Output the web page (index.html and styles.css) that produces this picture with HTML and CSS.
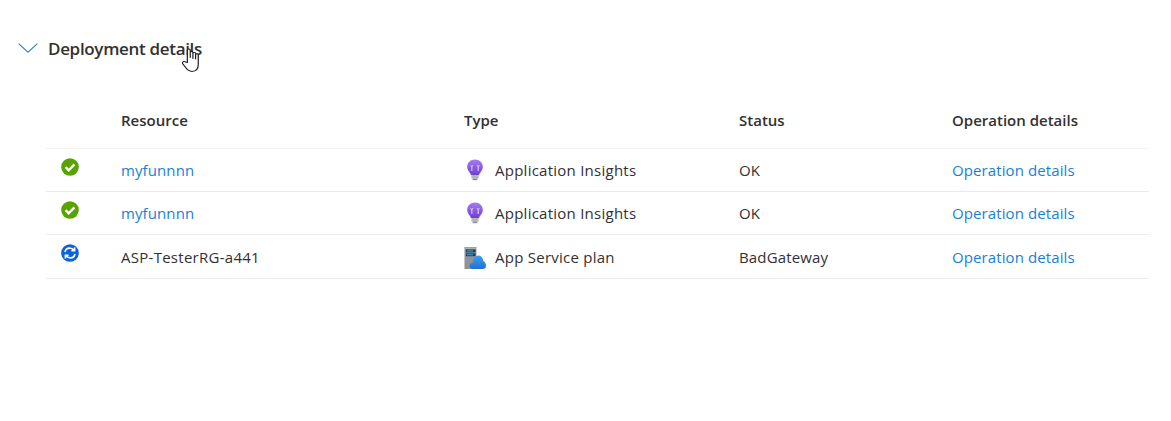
FILE: index.html
```html
<!DOCTYPE html>
<html lang="en">
<head>
<meta charset="utf-8">
<title>Deployment details</title>
<link rel="stylesheet" href="styles.css">
</head>
<body>
<main class="page">
  <header class="section-head">
    <svg class="chevron" width="20" height="10" viewBox="0 0 20 10"><path d="M0.6 0.6 L10 9.2 L19.4 0.6" fill="none" stroke="#2f86d8" stroke-width="1.2"/></svg>
    <h2 class="section-title">Deployment details</h2>
    <svg class="cursor" width="17" height="24" viewBox="0.2 0 14 25" preserveAspectRatio="none"><path d="M4.6 15.2 V2.4 C4.6 0.6 7 0.6 7 2.4 V10 V4.6 C7 3.2 9.2 3.2 9.2 4.6 V11 V5.6 C9.2 4.2 11.4 4.2 11.4 5.6 V11.4 V7 C11.4 5.8 13.6 5.8 13.6 7 V17 C13.6 21 12 24.4 8.4 24.4 C5.6 24.4 4.4 22.6 3.2 20.4 L0.8 16.4 C0 14.8 1.8 13.4 3 14.6 Z" fill="#fff" stroke="#1b1f24" stroke-width="1" stroke-linejoin="round"/></svg>
  </header>
  <section class="table">
    <div class="row head">
      <span></span><span>Resource</span><span>Type</span><span>Status</span><span>Operation details</span>
    </div>
    <div class="row">
      <span class="status-cell"><svg class="status" width="18" height="18" viewBox="0 0 18 18"><circle cx="9" cy="9" r="8.8" fill="#57a300"/><path d="M4.6 9.2 L7.7 12.3 L13.4 6.3" fill="none" stroke="#fff" stroke-width="2.4"/></svg></span>
      <a class="link">myfunnnn</a>
      <span class="type"><svg class="bulb" width="18" height="22" viewBox="0 0 18 22"><defs><linearGradient id="b1" x1="0" y1="0" x2="0" y2="1"><stop offset="0" stop-color="#a67af4"/><stop offset="1" stop-color="#6f3fd0"/></linearGradient></defs><path d="M9 0.6 C4.3 0.6 1.2 4 1.2 8 C1.2 11.6 4 13.2 5 16 H13 C14 13.2 16.8 11.6 16.8 8 C16.8 4 13.7 0.6 9 0.6Z" fill="url(#b1)"/><path d="M4.8 6.2 C4.8 8 6.8 8 6.8 6.2 M5.8 7.6 V12 M11.2 6.2 C11.2 8 13.2 8 13.2 6.2 M12.2 7.6 V12" fill="none" stroke="#e6d8fb" stroke-width="1"/><rect x="5.4" y="16" width="7.2" height="3.4" fill="#b5b5b5"/><rect x="6.6" y="19.4" width="4.8" height="1.8" fill="#8f8f8f"/></svg>Application Insights</span>
      <span>OK</span>
      <a class="link">Operation details</a>
    </div>
    <div class="row">
      <span class="status-cell"><svg class="status" width="18" height="18" viewBox="0 0 18 18"><circle cx="9" cy="9" r="8.8" fill="#57a300"/><path d="M4.6 9.2 L7.7 12.3 L13.4 6.3" fill="none" stroke="#fff" stroke-width="2.4"/></svg></span>
      <a class="link">myfunnnn</a>
      <span class="type"><svg class="bulb" width="18" height="22" viewBox="0 0 18 22"><defs><linearGradient id="b2" x1="0" y1="0" x2="0" y2="1"><stop offset="0" stop-color="#a67af4"/><stop offset="1" stop-color="#6f3fd0"/></linearGradient></defs><path d="M9 0.6 C4.3 0.6 1.2 4 1.2 8 C1.2 11.6 4 13.2 5 16 H13 C14 13.2 16.8 11.6 16.8 8 C16.8 4 13.7 0.6 9 0.6Z" fill="url(#b2)"/><path d="M4.8 6.2 C4.8 8 6.8 8 6.8 6.2 M5.8 7.6 V12 M11.2 6.2 C11.2 8 13.2 8 13.2 6.2 M12.2 7.6 V12" fill="none" stroke="#e6d8fb" stroke-width="1"/><rect x="5.4" y="16" width="7.2" height="3.4" fill="#b5b5b5"/><rect x="6.6" y="19.4" width="4.8" height="1.8" fill="#8f8f8f"/></svg>Application Insights</span>
      <span>OK</span>
      <a class="link">Operation details</a>
    </div>
    <div class="row">
      <span class="status-cell"><svg class="status" width="18" height="18" viewBox="0 0 18 18"><circle cx="9" cy="9" r="8.8" fill="#0b62dc"/><path d="M4 8 C4.6 5.2 7 3.9 9.4 4.2 C11 4.4 12.2 5.2 13 6.2 M13.6 3.6 V6.8 H10.4 M14 10 C13.4 12.8 11 14.1 8.6 13.8 C7 13.6 5.8 12.8 5 11.8 M4.4 14.4 V11.2 H7.6" fill="none" stroke="#fff" stroke-width="1.6"/></svg></span>
      <span class="name">ASP-TesterRG-a441</span>
      <span class="type"><svg class="plan" width="22" height="22" viewBox="0 0 23 23"><defs><linearGradient id="c1" x1="0" y1="0" x2="0" y2="1"><stop offset="0" stop-color="#3f9fec"/><stop offset="1" stop-color="#1f72d2"/></linearGradient></defs><rect x="0.5" y="0" width="12.5" height="23" fill="#8e9499"/><rect x="1.5" y="0.6" width="10.5" height="1.2" fill="#b7bcc0"/><rect x="2" y="2.6" width="10" height="3" fill="#173f5e"/><rect x="2" y="6.6" width="10" height="3" fill="#173f5e"/><rect x="3" y="3.6" width="6.5" height="1" fill="#4fb3e6"/><rect x="3" y="7.6" width="6.5" height="1" fill="#4fb3e6"/><path d="M9.5 23 C6.5 23 5.5 20.5 6 18.8 C6.6 17 8 16.4 9.2 16.4 C9.4 11.5 13 8.3 16 9 C18.6 9.6 20 11.8 20 14.5 C22 15.5 23 17.6 23 19.6 C23 21.8 21.6 23 19.6 23 Z" fill="url(#c1)"/></svg>App Service plan</span>
      <span>BadGateway</span>
      <a class="link">Operation details</a>
    </div>
  </section>
</main>
</body>
</html>
```
FILE: styles.css
```css
* { box-sizing: border-box; }
html, body { margin: 0; padding: 0; background: #fff; }
body {
  font-family: "Open Sans", "Noto Sans", "Liberation Sans", sans-serif;
  font-size: 15px;
  color: #323130;
  overflow: hidden;
}
.page { height: 421px; padding: 37px 22px 0 18px; }
.section-head {
  position: relative;
  display: flex;
  align-items: center;
  gap: 10px;
  height: 24px;
}
.chevron { flex: none; margin-top: -3px; }
.section-title {
  margin: 0;
  font-size: 17px;
  font-weight: 600;
  line-height: 24px;
  letter-spacing: -0.32px;
  color: #323130;
}
.cursor { position: absolute; left: 164px; top: 11px; }
.table { margin: 35px 0 0 28px; }
.row {
  display: grid;
  grid-template-columns: 75px 343px 275px 213px 1fr;
  align-items: center;
  height: 43.3px;
  border-bottom: 1px solid #ebebeb;
  letter-spacing: 0.15px;
}
.row.head {
  height: 52.8px;
  padding: 2px 0 6px;
  font-weight: 600;
  letter-spacing: 0;
  border-bottom-color: #f2f2f2;
}
.link { color: #1a7fd4; letter-spacing: 0.1px; }
.name { letter-spacing: 0.27px; }
.status-cell { display: flex; padding: 0 0 6.5px 14.5px; }
.status { display: block; }
.type { display: flex; align-items: center; gap: 10px; letter-spacing: 0.25px; }
.bulb { margin-left: 2px; margin-right: 1px; flex: none; }
.plan { margin-top: 2px; margin-right: -1px; flex: none; }
```
